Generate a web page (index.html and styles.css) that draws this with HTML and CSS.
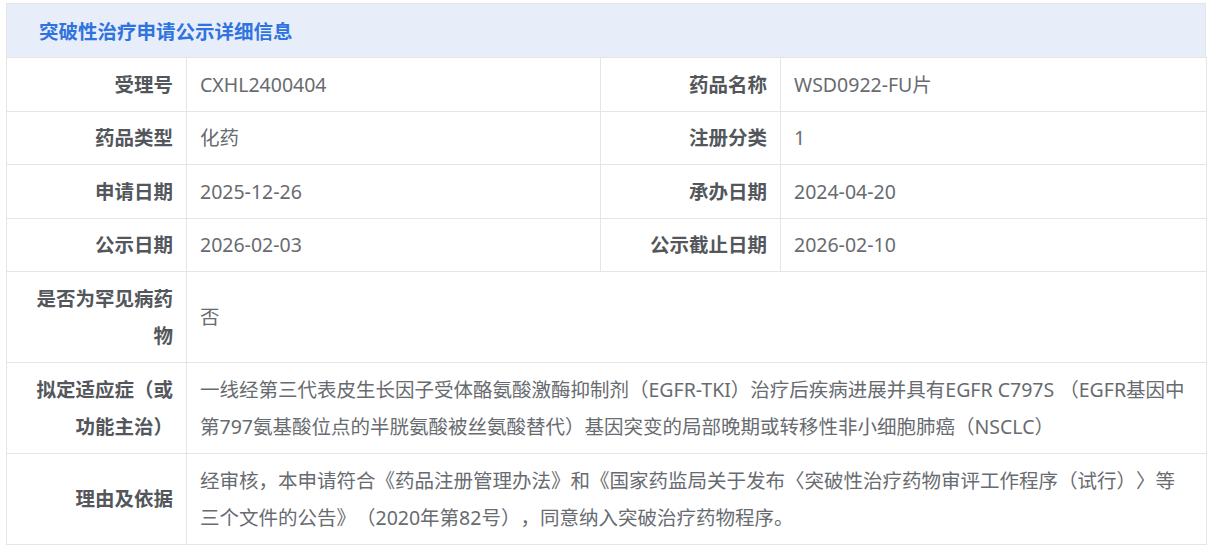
FILE: index.html
```html
<!DOCTYPE html>
<html lang="zh-CN">
<head>
<meta charset="utf-8">
<title>突破性治疗申请公示详细信息</title>
<link rel="stylesheet" href="styles.css">
</head>
<body>
<div class="panel">
  <div class="panel-head">突破性治疗申请公示详细信息</div>
  <table class="detail">
    <colgroup>
      <col class="c-label">
      <col class="c-value">
      <col class="c-label">
      <col class="c-value2">
    </colgroup>
    <tr>
      <th>受理号</th><td>CXHL2400404</td>
      <th>药品名称</th><td>WSD0922-FU片</td>
    </tr>
    <tr>
      <th>药品类型</th><td>化药</td>
      <th>注册分类</th><td>1</td>
    </tr>
    <tr>
      <th>申请日期</th><td>2025-12-26</td>
      <th>承办日期</th><td>2024-04-20</td>
    </tr>
    <tr>
      <th>公示日期</th><td>2026-02-03</td>
      <th>公示截止日期</th><td>2026-02-10</td>
    </tr>
    <tr>
      <th>是否为罕见病药物</th><td colspan="3">否</td>
    </tr>
    <tr>
      <th>拟定适应症（或功能主治）</th><td colspan="3">一线经第三代表皮生长因子受体酪氨酸激酶抑制剂（EGFR-TKI）治疗后疾病进展并具有EGFR C797S （EGFR基因中第797氨基酸位点的半胱氨酸被丝氨酸替代）基因突变的局部晚期或转移性非小细胞肺癌（NSCLC）</td>
    </tr>
    <tr>
      <th>理由及依据</th><td colspan="3">经审核，本申请符合《药品注册管理办法》和《国家药监局关于发布〈突破性治疗药物审评工作程序（试行）〉等三个文件的公告》（2020年第82号），同意纳入突破治疗药物程序。</td>
    </tr>
  </table>
</div>
</body>
</html>
```

FILE: styles.css
```css
html, body {
  background: #ffffff;
}
body {
  margin: 3px 0 0 6px;
  font-family: "Noto Sans", "Noto Sans CJK SC", sans-serif;
  font-size: 19.5px;
  text-spacing-trim: space-all;
}
.panel {
  width: 1200px;
}
.panel-head {
  height: 53px;
  line-height: 55px;
  padding-left: 32px;
  background: #e7edf9;
  border: 1px solid #e3e5e8;
  border-bottom: none;
  color: #2f74de;
  font-weight: bold;
  font-size: 19.5px;
}
.detail {
  width: 1200px;
  border-collapse: collapse;
  table-layout: fixed;
}
.c-label { width: 180px; }
.c-value { width: 414px; }
.c-value2 { width: 426px; }
.detail th,
.detail td {
  border: 1px solid #e3e5e8;
  padding: 7.5px 13px;
  line-height: 37.5px;
  vertical-align: middle;
  word-break: break-all;
}
.detail th {
  text-align: right;
  color: #53575c;
  font-weight: bold;
}
.detail td {
  text-align: left;
  color: #686b70;
  font-weight: normal;
}
```
